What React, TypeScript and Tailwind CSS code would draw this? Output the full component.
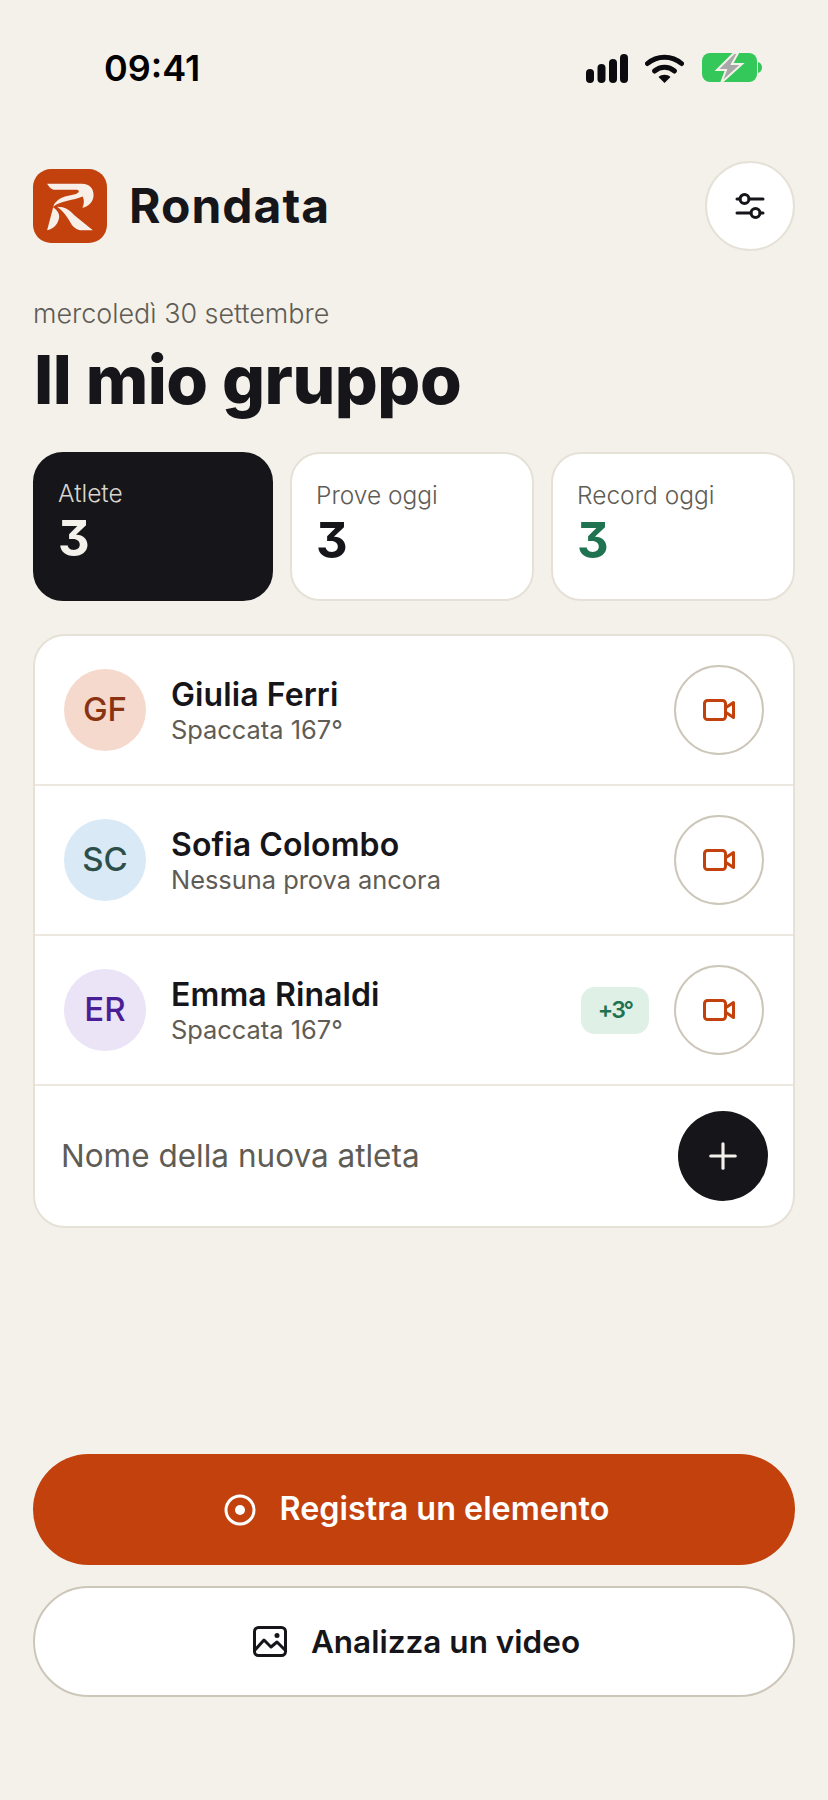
import { Plus } from 'lucide-react';

const athletes = [
  { initials: 'GF', name: 'Giulia Ferri', sub: 'Spaccata 167°', avatar: 'bg-[#f5d9cc] text-[#8a3312]' },
  { initials: 'SC', name: 'Sofia Colombo', sub: 'Nessuna prova ancora', avatar: 'bg-[#d9e9f5] text-[#2d4f4a]' },
  { initials: 'ER', name: 'Emma Rinaldi', sub: 'Spaccata 167°', avatar: 'bg-[#ebe3f6] text-[#4a1f96]', badge: '+3°' },
];

function StatusBar() {
  return (
    <div className="flex items-center justify-between h-[70px] mt-[33px] pl-[104px] pr-[66px]">
      <span className="font-['Inter'] text-[36px] font-semibold text-black leading-none">09:41</span>
      <div className="flex items-center">
        <svg width="42" height="29" viewBox="0 0 42 29" fill="#0b0b0f">
          <rect x="0" y="15" width="8" height="14" rx="4" />
          <rect x="11.500" y="10" width="8" height="19" rx="4" />
          <rect x="23" y="5" width="8" height="24" rx="4" />
          <rect x="34" y="0" width="8" height="29" rx="4" />
        </svg>
        <svg width="39" height="29" viewBox="0 0 39 29" fill="none" stroke="#0b0b0f" strokeWidth="5" strokeLinecap="round" className="ml-[17px]">
          <path d="M2.500 9.500C12 1 27 1 36.500 9.500" />
          <path d="M9.500 17c6-5 14-5 20 0" />
          <path d="M13.500 23 19.500 29l6-6c-3-3-9-3-12 0z" fill="#0b0b0f" stroke="none" />
        </svg>
        <svg width="60" height="30" viewBox="0 0 60 30" className="ml-[18px] overflow-visible">
          <rect x="0" y="0" width="55" height="29" rx="8" fill="#34c759" />
          <path d="M56 9c2.500.6 4 2.800 4 5.500s-1.500 4.900-4 5.500z" fill="#34c759" />
          <path d="M32 0 15 17h9l-5 13 21-19H30l6-11z" fill="#a8a8a8" stroke="#f4f1ea" strokeWidth="2" />
        </svg>
      </div>
    </div>
  );
}

function Logo() {
  return (
    <svg width="74" height="74" viewBox="40 28 220 220">
      <rect x="40" y="28" width="220" height="220" rx="54" fill="#c2410c" />
      <path fill="#f8efe8" d="M82 72H185C210 72 220 88 220 105C220 125 205 140 187 143C193 130 192 120 188 110C160 122 125 122 100 140C105 125 120 115 135 110L165 103C178 100 180 92 170 90H105C95 90 88 82 82 72Z" />
      <path fill="#f8efe8" d="M100 142C112 150 118 160 118 170C115 190 105 205 82 210Z" />
      <path fill="#f8efe8" d="M112 140C135 140 150 150 162 165L218 210H180C165 208 155 195 150 185C140 165 125 150 112 140Z" />
    </svg>
  );
}

function Stat({ label, value, dark, green }: { label: string; value: string; dark?: boolean; green?: boolean }) {
  return (
    <div className={`rounded-[30px] border-2 h-[149px] ${dark ? 'pl-[23px] pt-[23px] bg-[#15151a] border-[#15151a]' : 'pl-[24px] pt-[25px] bg-white border-[#e6e1d7]'}`}>
      <div className={`text-[24.5px] font-light leading-[32px] ${dark ? 'text-[#d9d5cc]' : 'text-[#5f5c55]'}`}>{label}</div>
      <div className={`text-[49px] font-bold leading-[56px] mt-[2px] [font-feature-settings:'cv09'] ${dark ? 'text-[#f4f1ea]' : green ? 'text-[#1f7350]' : 'text-[#15151a]'}`}>{value}</div>
    </div>
  );
}

export default function App() {
  return (
    <div className="w-[828px] h-[1800px] bg-[#f4f1ea] flex flex-col font-['Inter',sans-serif] text-[#15151a] overflow-hidden">
      <StatusBar />

      <div className="flex items-center justify-between px-[33px] mt-[58px]">
        <div className="flex items-center gap-[22px]">
          <Logo />
          <span className="text-[48px] font-bold tracking-[1px] leading-none">Rondata</span>
        </div>
        <button className="w-[90px] h-[90px] rounded-full bg-white border-2 border-[#e6e1d7] flex items-center justify-center">
          <svg width="30" height="30" viewBox="0 0 30 30" fill="none" stroke="#15151a" strokeWidth="3" strokeLinecap="round">
            <path d="M2 8h3M14 8h14M2 22h14M25 22h3" />
            <circle cx="9.500" cy="8" r="4.500" />
            <circle cx="20.500" cy="22" r="4.500" />
          </svg>
        </button>
      </div>

      <div className="px-[33px] mt-[46px] text-[26.9px] font-light leading-[32px] text-[#5f5c55]">mercoledì 30 settembre</div>
      <h1 className="pl-[34px] pr-[33px] mt-[8px] text-[67.5px] font-extrabold leading-[85px] tracking-[-0.5px]">Il mio gruppo</h1>

      <div className="grid grid-cols-[240px_244px_244px] gap-[17px] px-[33px] mt-[30px]">
        <Stat label="Atlete" value="3" dark />
        <Stat label="Prove oggi" value="3" />
        <Stat label="Record oggi" value="3" green />
      </div>

      <div className="mx-[33px] mt-[33px] bg-white border-2 border-[#e6e1d7] rounded-[32px] overflow-hidden">
        {athletes.map(a => (
          <div key={a.name} className="flex items-center h-[150px] pl-[29px] pr-[29px] border-b-2 border-[#ece8e0]">
            <div className={`w-[82px] h-[82px] rounded-full flex items-center justify-center text-[33px] font-medium ${a.avatar}`}>{a.initials}</div>
            <div className="ml-[25px] flex-1 mt-[2px]">
              <div className="text-[32px] font-semibold leading-[38px] tracking-[0.1px]">{a.name}</div>
              <div className="text-[25.4px] leading-[32px] text-[#5f5c55]">{a.sub}</div>
            </div>
            {a.badge && (
              <span className="mr-[25px] h-[47px] w-[68px] rounded-[14px] bg-[#dff0e6] text-[#1f7350] text-[23px] tracking-[-2px] font-semibold flex items-center justify-center">{a.badge}</span>
            )}
            <button className="w-[90px] h-[90px] rounded-full border-2 border-[#cdc7ba] flex items-center justify-center">
              <svg width="32" height="22" viewBox="0 0 32 22" fill="none" stroke="#c2410c" strokeWidth="3" strokeLinejoin="round">
                <rect x="1.500" y="1.500" width="21" height="19" rx="3" />
                <path d="M23 8.500 30.500 3.500V18.500L23 13.500" />
              </svg>
            </button>
          </div>
        ))}
        <div className="flex items-center justify-between h-[140px] pl-[26px] pr-[25px]">
          <span className="text-[31.5px] text-[#5f5c55]">Nome della nuova atleta</span>
          <button className="w-[90px] h-[90px] rounded-full bg-[#15151a] flex items-center justify-center">
            <Plus size={42} strokeWidth={1.800} className="text-[#f4f1ea]" />
          </button>
        </div>
      </div>

      <div className="flex-1" />

      <div className="flex flex-col gap-[21px] px-[33px] pb-[103px]">
        <button className="h-[111px] pl-[5px] rounded-full bg-[#c2410c] text-white flex items-center justify-center gap-[24px] text-[32.3px] font-semibold">
          <svg width="32" height="32" viewBox="0 0 32 32" fill="none" stroke="currentColor" strokeWidth="3">
            <circle cx="16" cy="16" r="14" />
            <circle cx="16" cy="16" r="5" fill="currentColor" stroke="none" />
          </svg>
          Registra un elemento
        </button>
        <button className="h-[111px] pl-[5px] rounded-full bg-white border-2 border-[#cdc7ba] flex items-center justify-center gap-[24px] text-[31.5px] font-semibold">
          <svg width="34" height="31" viewBox="0 0 34 31" fill="none" stroke="currentColor" strokeWidth="3" strokeLinejoin="round">
            <rect x="1.500" y="1.500" width="31" height="28" rx="4" />
            <circle cx="24" cy="9.500" r="2.500" fill="currentColor" stroke="none" />
            <path d="M2 24 11 14 18 21 24 16 32 24" />
          </svg>
          Analizza un video
        </button>
      </div>
    </div>
  );
}
